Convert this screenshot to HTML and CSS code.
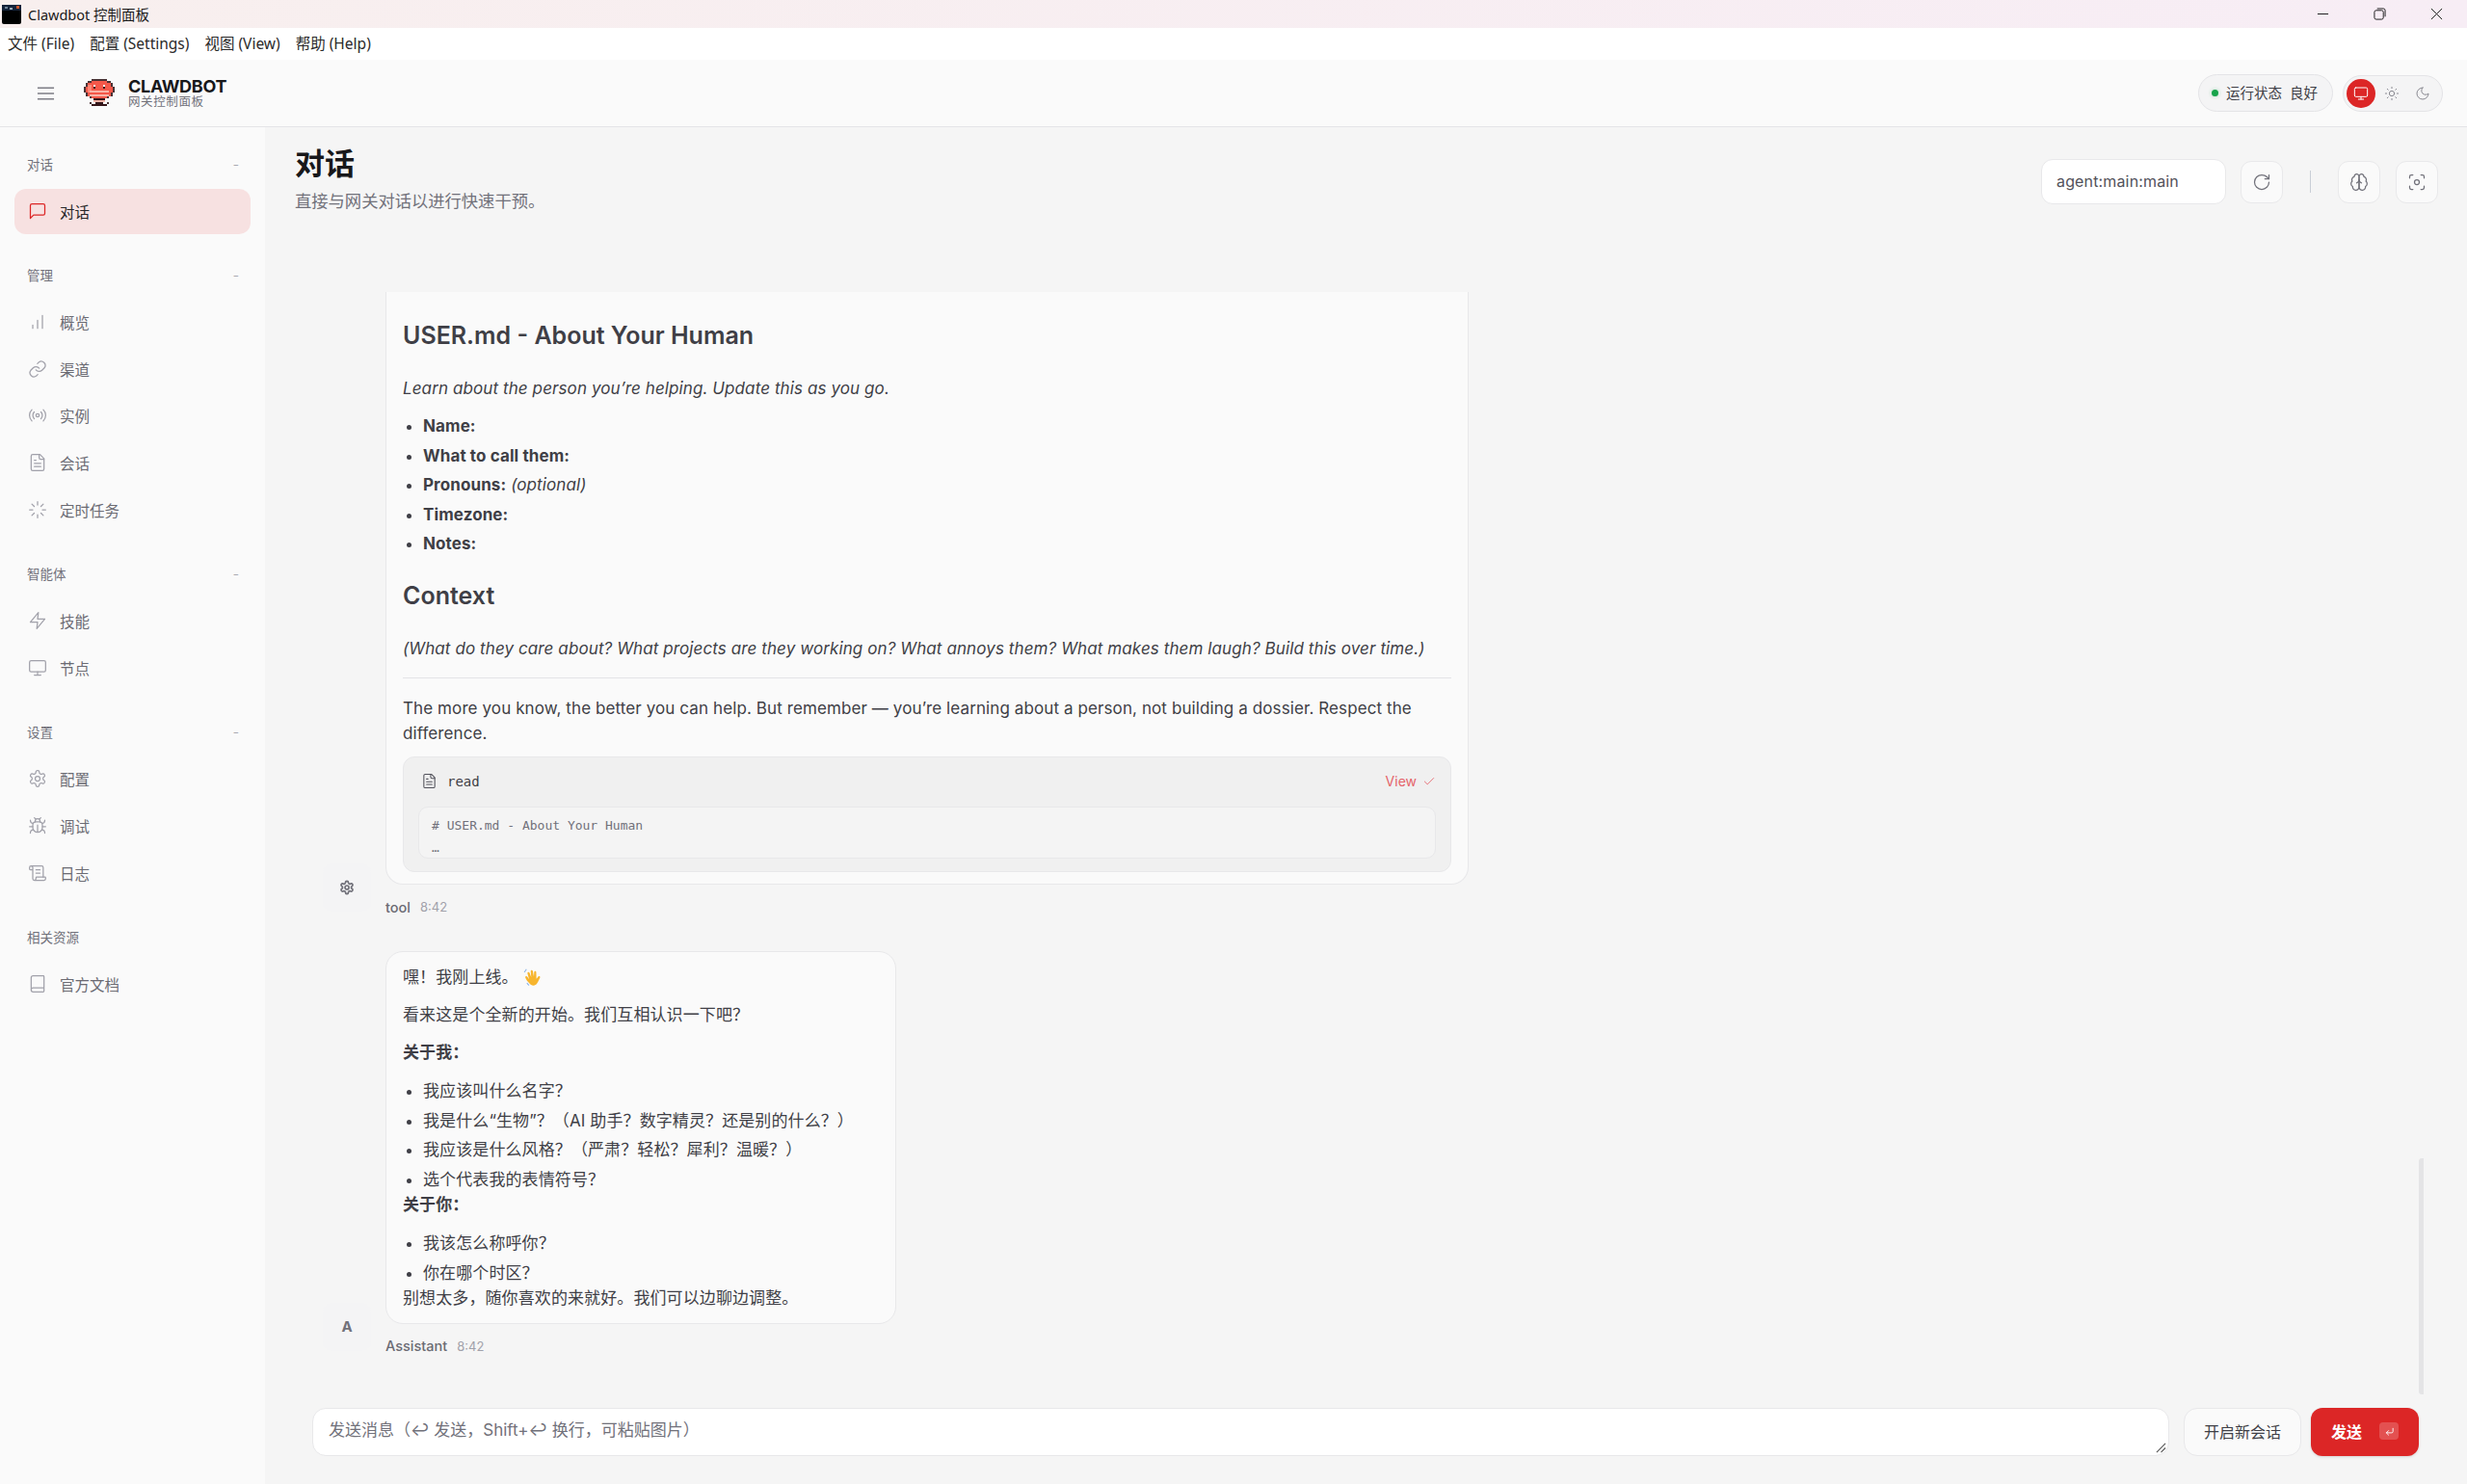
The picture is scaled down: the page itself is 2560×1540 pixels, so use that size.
FILE: index.html
```html
<!DOCTYPE html>
<html lang="zh-CN">
<head>
<meta charset="utf-8">
<title>Clawdbot 控制面板</title>
<link rel="stylesheet" href="styles.css">
</head>
<body>
<svg class="sprites" width="0" height="0">
  <defs>
    <symbol id="i-msg" viewBox="0 0 24 24"><path d="M21 15a2 2 0 0 1-2 2H7l-4 4V5a2 2 0 0 1 2-2h14a2 2 0 0 1 2 2z"/></symbol>
    <symbol id="i-bars" viewBox="0 0 24 24"><path d="M18 20V4M12 20V10M6 20v-4"/></symbol>
    <symbol id="i-link" viewBox="0 0 24 24"><path d="M10 13a5 5 0 0 0 7.5.5l3-3a5 5 0 0 0-7-7l-1.7 1.7"/><path d="M14 11a5 5 0 0 0-7.5-.5l-3 3a5 5 0 0 0 7 7l1.7-1.7"/></symbol>
    <symbol id="i-radio" viewBox="0 0 24 24"><path d="M4.9 19.1a10 10 0 0 1 0-14.2M7.8 16.2a6 6 0 0 1 0-8.4M16.2 7.8a6 6 0 0 1 0 8.4M19.1 4.9a10 10 0 0 1 0 14.2"/><circle cx="12" cy="12" r="2"/></symbol>
    <symbol id="i-file" viewBox="0 0 24 24"><path d="M15 2H6a2 2 0 0 0-2 2v16a2 2 0 0 0 2 2h12a2 2 0 0 0 2-2V7z"/><path d="M14 2v4a2 2 0 0 0 2 2h4M16 13H8M16 17H8M10 9H8"/></symbol>
    <symbol id="i-load" viewBox="0 0 24 24"><path d="M12 2v4M12 18v4M4.9 4.9l2.9 2.9M16.2 16.2l2.9 2.9M2 12h4M18 12h4M4.9 19.1l2.9-2.9M16.2 7.8l2.9-2.9"/></symbol>
    <symbol id="i-zap" viewBox="0 0 24 24"><path d="M13 2 3 14h9l-1 8 10-12h-9z"/></symbol>
    <symbol id="i-monitor" viewBox="0 0 24 24"><rect x="2" y="3" width="20" height="14" rx="2"/><path d="M8 21h8M12 17v4"/></symbol>
    <symbol id="i-gear" viewBox="0 0 24 24"><path d="M12.2 2h-.4a2 2 0 0 0-2 2v.2a2 2 0 0 1-1 1.7l-.4.3a2 2 0 0 1-2 0l-.2-.1a2 2 0 0 0-2.7.7l-.2.4a2 2 0 0 0 .7 2.7l.2.1a2 2 0 0 1 1 1.7v.5a2 2 0 0 1-1 1.7l-.2.1a2 2 0 0 0-.7 2.7l.2.4a2 2 0 0 0 2.7.7l.2-.1a2 2 0 0 1 2 0l.4.3a2 2 0 0 1 1 1.7v.2a2 2 0 0 0 2 2h.4a2 2 0 0 0 2-2v-.2a2 2 0 0 1 1-1.7l.4-.3a2 2 0 0 1 2 0l.2.1a2 2 0 0 0 2.7-.7l.2-.4a2 2 0 0 0-.7-2.7l-.2-.1a2 2 0 0 1-1-1.7v-.5a2 2 0 0 1 1-1.7l.2-.1a2 2 0 0 0 .7-2.7l-.2-.4a2 2 0 0 0-2.7-.7l-.2.1a2 2 0 0 1-2 0l-.4-.3a2 2 0 0 1-1-1.7V4a2 2 0 0 0-2-2z"/><circle cx="12" cy="12" r="3"/></symbol>
    <symbol id="i-bug" viewBox="0 0 24 24"><path d="m8 2 1.9 1.9M14.1 3.9 16 2M9 7.1v-1a3 3 0 1 1 6 0v1"/><path d="M12 20c-3.3 0-6-2.7-6-6v-3a4 4 0 0 1 4-4h4a4 4 0 0 1 4 4v3c0 3.3-2.7 6-6 6zM12 20v-9"/><path d="M6.5 9C4.6 8.8 3 7.1 3 5M6 13H2M3 21c0-2.1 1.7-3.900 3.800-4M21 5c0 2.100-1.600 3.800-3.500 4M22 13h-4M17.200 17c2.100.1 3.800 1.900 3.800 4"/></symbol>
    <symbol id="i-scroll" viewBox="0 0 24 24"><path d="M15 12h-5M15 8h-5M19 17V5a2 2 0 0 0-2-2H4"/><path d="M8 21h12a2 2 0 0 0 2-2v-1a1 1 0 0 0-1-1H11a1 1 0 0 0-1 1v1a2 2 0 1 1-4 0V5a2 2 0 1 0-4 0v2a1 1 0 0 0 1 1h3"/></symbol>
    <symbol id="i-book" viewBox="0 0 24 24"><path d="M4 19.5v-15A2.5 2.5 0 0 1 6.500 2H19a1 1 0 0 1 1 1v18a1 1 0 0 1-1 1H6.500a1 1 0 0 1 0-5H20"/></symbol>
    <symbol id="i-refresh" viewBox="0 0 24 24"><path d="M21 12a9 9 0 1 1-9-9c2.500 0 4.900 1 6.700 2.700L21 8"/><path d="M21 3v5h-5"/></symbol>
    <symbol id="i-brain" viewBox="0 0 24 24"><path d="M12 5a3 3 0 1 0-5.997.125 4 4 0 0 0-2.526 5.770 4 4 0 0 0 .556 6.588A4 4 0 1 0 12 18z"/><path d="M12 5a3 3 0 1 1 5.997.125 4 4 0 0 1 2.526 5.770 4 4 0 0 1-.556 6.588A4 4 0 1 1 12 18z"/><path d="M15 13a4.500 4.500 0 0 1-3-4 4.500 4.500 0 0 1-3 4"/></symbol>
    <symbol id="i-focus" viewBox="0 0 24 24"><circle cx="12" cy="12" r="3"/><path d="M3 7V5a2 2 0 0 1 2-2h2M17 3h2a2 2 0 0 1 2 2v2M21 17v2a2 2 0 0 1-2 2h-2M7 21H5a2 2 0 0 1-2-2v-2"/></symbol>
    <symbol id="i-sun" viewBox="0 0 24 24"><circle cx="12" cy="12" r="4"/><path d="M12 2v2M12 20v2M4.900 4.900l1.400 1.400M17.700 17.700l1.400 1.400M2 12h2M20 12h2M6.300 17.700l-1.400 1.400M19.100 4.900l-1.400 1.400"/></symbol>
    <symbol id="i-moon" viewBox="0 0 24 24"><path d="M12 3a6 6 0 0 0 9 9 9 9 0 1 1-9-9z"/></symbol>
    <symbol id="i-check" viewBox="0 0 24 24"><path d="M20 6 9 17l-5-5"/></symbol>
    <symbol id="i-enter" viewBox="0 0 24 24"><path d="M20 5v7a3 3 0 0 1-3 3H5M10 10l-5 5 5 5"/></symbol>
  </defs>
</svg>

<div class="titlebar">
  <svg class="app-icon" viewBox="0 0 20 20">
    <rect width="20" height="20" rx="2" fill="#000"/>
    <rect width="20" height="6" fill="#14233a"/>
    <rect x="15" y="1" width="3" height="3" fill="#c8552c"/>
    <rect x="3" y="2" width="3" height="2" fill="#6f8397"/>
    <rect x="8" y="3" width="3" height="2" fill="#9aa9b5"/>
  </svg>
  <span class="titlebar-text">Clawdbot 控制面板</span>
  <div class="win-controls">
    <svg viewBox="0 0 14 14"><path d="M1 7h12"/></svg>
    <svg viewBox="0 0 14 14"><rect x="1" y="3" width="10" height="10" rx="2"/><path d="M4 1h7a2 2 0 0 1 2 2v7"/></svg>
    <svg viewBox="0 0 14 14"><path d="M1 1l12 12M13 1 1 13"/></svg>
  </div>
</div>

<div class="menubar">
  <span>文件 (File)</span>
  <span>配置 (Settings)</span>
  <span>视图 (View)</span>
  <span>帮助 (Help)</span>
</div>

<header class="topbar">
  <svg class="hamburger" viewBox="0 0 20 16"><path d="M1 2h18M1 8h18M1 14h18"/></svg>
  <svg class="logo" viewBox="0 0 16 15" shape-rendering="crispEdges">
    <path fill="#4a3235" d="M4 0h8v1H4zM2 1h2v1H2zM12 1h2v1h-2zM1 2h1v2H1zM14 2h1v2h-1zM0 4h1v3H0zM15 4h1v3h-1zM1 7h1v2H1zM14 7h1v2h-1zM3 9h1v1H3zM12 9h1v1h-1zM3 12h1v1H3zM12 12h1v1h-1z"/>
    <path fill="#f4584a" d="M4 1h8v1h2v2h1v3h-1v2h-2v1H4V9H2V7H1V4h1V2h2z"/>
    <path fill="#ff8576" d="M2 3h2v4H2z"/>
    <path fill="#35161a" d="M5 4h1v1H5zM10 4h1v1h-1zM5 10h6v1H5zM4 13h8v1H4zM6 12h4v1H6z"/>
    <path fill="#fff" d="M5 3h1v1H5zM10 3h1v1h-1z"/>
    <path fill="#f7b4a8" d="M3 6h10v1H3zM3 8h10v1H3zM5 11h6v1H5z"/>
  </svg>
  <div class="brand">
    <div class="brand-name">CLAWDBOT</div>
    <div class="brand-sub">网关控制面板</div>
  </div>
  <div class="topbar-right">
    <div class="status-pill"><i class="dot"></i><span>运行状态</span><span>良好</span></div>
    <div class="theme-pill">
      <span class="theme-btn is-active"><svg class="ico"><use href="#i-monitor"/></svg></span>
      <span class="theme-btn"><svg class="ico"><use href="#i-sun"/></svg></span>
      <span class="theme-btn"><svg class="ico"><use href="#i-moon"/></svg></span>
    </div>
  </div>
</header>

<div class="shell">
  <nav class="sidebar">
    <section class="nav-group">
      <div class="nav-label"><span>对话</span><b>−</b></div>
      <a class="nav-item is-active"><svg class="ico"><use href="#i-msg"/></svg>对话</a>
    </section>
    <section class="nav-group">
      <div class="nav-label"><span>管理</span><b>−</b></div>
      <a class="nav-item"><svg class="ico"><use href="#i-bars"/></svg>概览</a>
      <a class="nav-item"><svg class="ico"><use href="#i-link"/></svg>渠道</a>
      <a class="nav-item"><svg class="ico"><use href="#i-radio"/></svg>实例</a>
      <a class="nav-item"><svg class="ico"><use href="#i-file"/></svg>会话</a>
      <a class="nav-item"><svg class="ico"><use href="#i-load"/></svg>定时任务</a>
    </section>
    <section class="nav-group">
      <div class="nav-label"><span>智能体</span><b>−</b></div>
      <a class="nav-item"><svg class="ico"><use href="#i-zap"/></svg>技能</a>
      <a class="nav-item"><svg class="ico"><use href="#i-monitor"/></svg>节点</a>
    </section>
    <section class="nav-group">
      <div class="nav-label"><span>设置</span><b>−</b></div>
      <a class="nav-item"><svg class="ico"><use href="#i-gear"/></svg>配置</a>
      <a class="nav-item"><svg class="ico"><use href="#i-bug"/></svg>调试</a>
      <a class="nav-item"><svg class="ico"><use href="#i-scroll"/></svg>日志</a>
    </section>
    <section class="nav-group">
      <div class="nav-label"><span>相关资源</span></div>
      <a class="nav-item"><svg class="ico"><use href="#i-book"/></svg>官方文档</a>
    </section>
  </nav>

  <main class="main">
    <div class="page-head">
      <div class="page-titles">
        <h1>对话</h1>
        <p>直接与网关对话以进行快速干预。</p>
      </div>
      <div class="page-actions">
        <div class="session-select">agent:main:main</div>
        <button class="icon-btn"><svg class="ico"><use href="#i-refresh"/></svg></button>
        <i class="v-sep"></i>
        <button class="icon-btn"><svg class="ico"><use href="#i-brain"/></svg></button>
        <button class="icon-btn"><svg class="ico"><use href="#i-focus"/></svg></button>
      </div>
    </div>

    <div class="thread">
      <article class="msg">
        <div class="avatar"><svg class="ico ico-strong"><use href="#i-gear"/></svg></div>
        <div class="msg-body">
          <div class="bubble bubble-clipped">
            <h2>USER.md - About Your Human</h2>
            <p><em>Learn about the person you’re helping. Update this as you go.</em></p>
            <ul>
              <li><strong>Name:</strong></li>
              <li><strong>What to call them:</strong></li>
              <li><strong>Pronouns:</strong> <em>(optional)</em></li>
              <li><strong>Timezone:</strong></li>
              <li><strong>Notes:</strong></li>
            </ul>
            <h2>Context</h2>
            <p><em>(What do they care about? What projects are they working on? What annoys them? What makes them laugh? Build this over time.)</em></p>
            <hr>
            <p class="tight">The more you know, the better you can help. But remember — you’re learning about a person, not building a dossier. Respect the difference.</p>
            <div class="tool-card">
              <div class="tool-head">
                <svg class="ico"><use href="#i-file"/></svg>
                <span class="tool-name">read</span>
                <span class="tool-view">View <svg class="ico"><use href="#i-check"/></svg></span>
              </div>
              <pre class="tool-output"># USER.md - About Your Human
…</pre>
            </div>
          </div>
          <div class="msg-meta"><span class="who">tool</span><span class="when">8:42</span></div>
        </div>
      </article>

      <article class="msg">
        <div class="avatar avatar-text">A</div>
        <div class="msg-body">
          <div class="bubble bubble-cn">
            <p>嘿！我刚上线。<svg class="wave" viewBox="0 0 20 20"><path fill="#f7b52e" d="M7 17c-2.500-2-4.500-5-5-6.500-.5-1.300 1-2 1.800-1L5.500 12 4 6.500c-.3-1.300 1.400-1.800 1.900-.6L7.500 10 7 4.500c-.1-1.400 1.800-1.500 2-.2l1 5.200.3-4.300c.1-1.300 1.900-1.200 1.900.1l.2 6.200 1.700-2c.8-1 2.300 0 1.600 1.100-1 1.800-1.700 3.900-2.700 5.400-1.500 2.200-3.800 2.600-6 1z"/><path fill="none" stroke="#8fb7e8" stroke-width="1" d="M1 5.500 3 2.500M3.500 15.500c.5 1 1 1.500 2 2.200"/></svg></p>
            <p>看来这是个全新的开始。我们互相认识一下吧？</p>
            <p class="before-list"><strong>关于我：</strong></p>
            <ul>
              <li>我应该叫什么名字？</li>
              <li>我是什么“生物”？（AI 助手？数字精灵？还是别的什么？）</li>
              <li>我应该是什么风格？（严肃？轻松？犀利？温暖？）</li>
              <li>选个代表我的表情符号？</li>
            </ul>
            <p class="flush before-list"><strong>关于你：</strong></p>
            <ul>
              <li>我该怎么称呼你？</li>
              <li>你在哪个时区？</li>
            </ul>
            <p class="flush">别想太多，随你喜欢的来就好。我们可以边聊边调整。</p>
          </div>
          <div class="msg-meta"><span class="who">Assistant</span><span class="when">8:42</span></div>
        </div>
      </article>
      <i class="scroll-thumb"></i>
    </div>

    <div class="compose">
      <div class="compose-input">
        <span>发送消息（↩ 发送，Shift+↩ 换行，可粘贴图片）</span>
        <svg class="grip" viewBox="0 0 12 12"><path d="M1 11 11 1M6 11l5-5"/></svg>
      </div>
      <button class="btn-new">开启新会话</button>
      <button class="btn-send">发送<span class="kbd"><svg class="ico"><use href="#i-enter"/></svg></span></button>
    </div>
  </main>
</div>
</body>
</html>
```
FILE: styles.css
```css
* { box-sizing: border-box; }
html, body { margin: 0; height: 100%; }
body {
  display: flex; flex-direction: column; height: 1540px; overflow: hidden;
  font-family: Inter, "Noto Sans CJK SC", sans-serif;
  color: #3f3f46; background: #f5f5f5;
}
.sprites { position: absolute; }
.ico { width: 20px; height: 20px; fill: none; stroke: currentColor; stroke-width: 1.5; stroke-linecap: round; stroke-linejoin: round; flex: none; }

.titlebar { height: 29px; display: flex; align-items: center; padding: 0 0 1px 2px; background: linear-gradient(90deg, #f8efee, #f7edf5); color: #1a1a1a; }
.app-icon { width: 20px; height: 20px; margin: 1px 7px 0 0; }
.titlebar-text { font: 14.5px "Noto Sans", "Noto Sans CJK SC", sans-serif; }
.win-controls { margin-left: auto; display: flex; gap: 46px; padding-right: 25px; }
.win-controls svg { width: 13px; height: 13px; fill: none; stroke: #111; stroke-width: 1; }

.menubar { height: 33px; background: #fff; display: flex; align-items: center; gap: 16px; padding: 0 0 2px 8px; font: 15.5px "Noto Sans", "Noto Sans CJK SC", sans-serif; color: #2b2b2b; }

.topbar { height: 70px; flex: none; display: flex; align-items: center; background: #fafafa; border-bottom: 1px solid #e4e4e7; padding: 0 25px 0 38px; }
.hamburger { width: 19px; height: 16px; fill: none; stroke: #7d7d85; stroke-width: 1.6; margin-right: 30px; }
.logo { width: 32px; height: 30px; margin-right: 14px; }
.brand { line-height: 1; }
.brand-name { font: 700 18px/18px Inter, sans-serif; color: #18181b; letter-spacing: -.3px; }
.brand-sub { font-size: 12.5px; line-height: 14px; letter-spacing: .6px; color: #71717a; }
.topbar-right { margin-left: auto; display: flex; align-items: center; gap: 10px; }
.status-pill { height: 39px; width: 140px; display: flex; align-items: center; gap: 8px; padding: 0 0 2px 13px; border-radius: 20px; border: 1px solid #e4e4e7; background: #f4f4f5; font-size: 14.5px; color: #3f3f46; }
.dot { width: 7px; height: 7px; border-radius: 50%; background: #16a34a; box-shadow: 0 0 4px #16a34a55; margin: 2px 0 0; }
.theme-pill { height: 38px; width: 104px; display: flex; align-items: center; padding: 0 3px; border-radius: 19px; border: 1px solid #e4e4e7; background: #f4f4f5; }
.theme-btn { width: 30px; height: 30px; border-radius: 50%; display: flex; align-items: center; justify-content: center; color: #8a8a92; margin-right: 2.5px; }
.theme-btn .ico { width: 16px; height: 16px; }
.theme-btn.is-active { background: #dc2626; color: #fff; }

.shell { flex: 1; display: flex; min-height: 0; }
.sidebar { width: 275px; flex: none; background: #fafafa; padding: 25px 15px 0; }
.nav-group { margin-bottom: 29px; }
.nav-label { height: 26px; margin-bottom: 12px; display: flex; align-items: center; justify-content: space-between; padding: 0 12px 0 13px; font-size: 13.5px; color: #71717a; }
.nav-label b { font-weight: 400; color: #a1a1aa; font-size: 10px; }
.nav-item { height: 48.6px; display: flex; align-items: center; gap: 13px; padding-left: 14px; font-size: 15.5px; color: #6b6b73; }
.nav-item .ico { color: #a1a1aa; }
.nav-item.is-active { background: #f7e1e1; border-radius: 12px; color: #27272a; height: 47px; margin-top: 13px; padding-bottom: 2px; }
.nav-item.is-active .ico { color: #dc2626; }

.main { flex: 1; min-width: 0; display: flex; flex-direction: column; }
.page-head { height: 171px; flex: none; display: flex; justify-content: space-between; padding: 15px 30px 0 31px; }
.page-titles h1 { margin: 0; font-size: 31px; line-height: 46px; font-weight: 700; color: #18181b; }
.page-titles p { margin: 4px 0 0; font-size: 17.3px; line-height: 24px; color: #71717a; }
.page-actions { display: flex; align-items: center; height: 47px; margin-top: 18px; }
.session-select { width: 192px; height: 47px; border: 1px solid #e8e8ea; border-radius: 12px; background: #fff; display: flex; align-items: center; padding: 0 0 1px 15px; font-size: 16px; letter-spacing: .15px; color: #52525b; margin-right: 15px; }
.icon-btn { width: 44px; height: 44px; border: 1px solid #e9e9eb; border-radius: 11px; background: #fafafa; display: flex; align-items: center; justify-content: center; color: #71717a; padding: 0; margin-right: 16px; }
.icon-btn:last-child { margin-right: 0; }
.v-sep { width: 1px; height: 23px; background: #c9ced6; margin: 0 28px 0 12px; }

.thread { flex: 1; min-height: 0; position: relative; padding: 0 0 0 61px; }
.msg { display: flex; align-items: flex-end; width: 100%; margin-bottom: 34.5px; }
.avatar { width: 50px; height: 50px; flex: none; display: flex; align-items: center; justify-content: center; margin: 0 15px 6px -1px; border-radius: 10px; background: #f4f4f5; color: #71717a; }
.avatar-text { font-size: 15px; font-weight: 700; }
.ico-strong { stroke-width: 2.6; width: 16px; height: 16px; }
.msg-body { min-width: 0; }
.bubble { border: 1px solid #e8e8ea; border-radius: 18px; background: #fafafa; padding: 13px 17px 13px; font-size: 17px; line-height: 26px; letter-spacing: .1px; color: #3f3f46; }
.bubble-clipped { width: 1124px; border-top: 0; border-radius: 0 0 18px 18px; padding-top: 27px; padding-bottom: 12px; }
.bubble-cn { width: 530px; }
.bubble h2 { margin: 0 0 24px; font-size: 25px; line-height: 36px; font-weight: 600; letter-spacing: 0; }
.bubble h2:not(:first-child) { margin-top: 23px; }
.bubble p { margin: 0 0 13px; }
.bubble p.before-list { margin-bottom: 14.5px; }
.bubble p.tight { margin-bottom: 11px; }
.bubble p.flush:last-child { margin: 0; }
.bubble ul { margin: 0 0 12px; padding-left: 21px; }
.bubble ul:has(+ .flush) { margin-bottom: 0; }
.bubble li { margin-bottom: 4.5px; }
.bubble li:last-child { margin-bottom: 0; }
.bubble hr { border: 0; border-top: 1px solid #e4e4e7; margin: 17px 0 18px; }
.bubble strong { font-weight: 700; }
.wave { width: 22px; height: 22px; vertical-align: -5px; margin-left: 5px; }
.tool-card { height: 120px; border: 1px solid #e8e8ea; border-radius: 12px; background: #f0f0f0; padding: 0 15px; letter-spacing: 0; }
.tool-head { height: 49px; margin-bottom: 2px; display: flex; align-items: center; gap: 10px; padding: 0 0 0 3px; }
.tool-head .ico { width: 17px; height: 17px; color: #52525b; }
.tool-name { font: 14px "DejaVu Sans Mono", monospace; color: #3f3f46; }
.tool-view { margin-left: auto; display: flex; align-items: center; gap: 6px; color: #e5646a; font-size: 14px; }
.tool-view .ico { width: 14px; height: 14px; color: #e5646a; }
.tool-output { margin: 0; height: 54px; border: 1px solid #e8e8ea; border-radius: 10px; background: #f4f4f4; padding: 7px 13px; font: 13px/23px "DejaVu Sans Mono", monospace; color: #71717a; }
.msg-meta { display: flex; align-items: center; gap: 10px; height: 22px; margin-top: 12px; font-size: 14.5px; color: #6b6b73; }
.who { font-weight: 500; }
.when { color: #a1a1aa; font-size: 13px; }
.scroll-thumb { position: absolute; left: 2235px; top: 899px; width: 5px; height: 245px; background: #e4e4e6; border-radius: 3px 0 0 3px; }

.compose { height: 79px; flex: none; display: flex; gap: 15px; padding: 0 50px 0 49px; }
.compose-input { flex: 1; height: 50px; position: relative; border: 1px solid #e8e8ea; border-radius: 14px; background: #fff; padding: 10px 16px; font-size: 17px; line-height: 24px; color: #71717a; }
.grip { position: absolute; right: 2px; bottom: 2px; width: 11px; height: 11px; fill: none; stroke: #555; stroke-width: 1.2; }
.btn-new { width: 122px; height: 50px; border: 1px solid #e8e8ea; border-radius: 14px; background: #fafafa; font: 16px Inter, "Noto Sans CJK SC", sans-serif; color: #3f3f46; padding: 0 0 2px; }
.btn-send { width: 112px; height: 50px; margin-left: -5px; border: 0; border-radius: 12px; background: #dc2626; color: #fff; font: 700 16px Inter, "Noto Sans CJK SC", sans-serif; display: flex; align-items: center; justify-content: center; gap: 18px; padding: 0 0 2px; box-shadow: 0 1px 3px #0002; }
.kbd { width: 20px; height: 18px; border-radius: 4px; background: #ffffff33; display: flex; align-items: center; justify-content: center; }
.kbd .ico { width: 11px; height: 11px; stroke-width: 2; }
```
